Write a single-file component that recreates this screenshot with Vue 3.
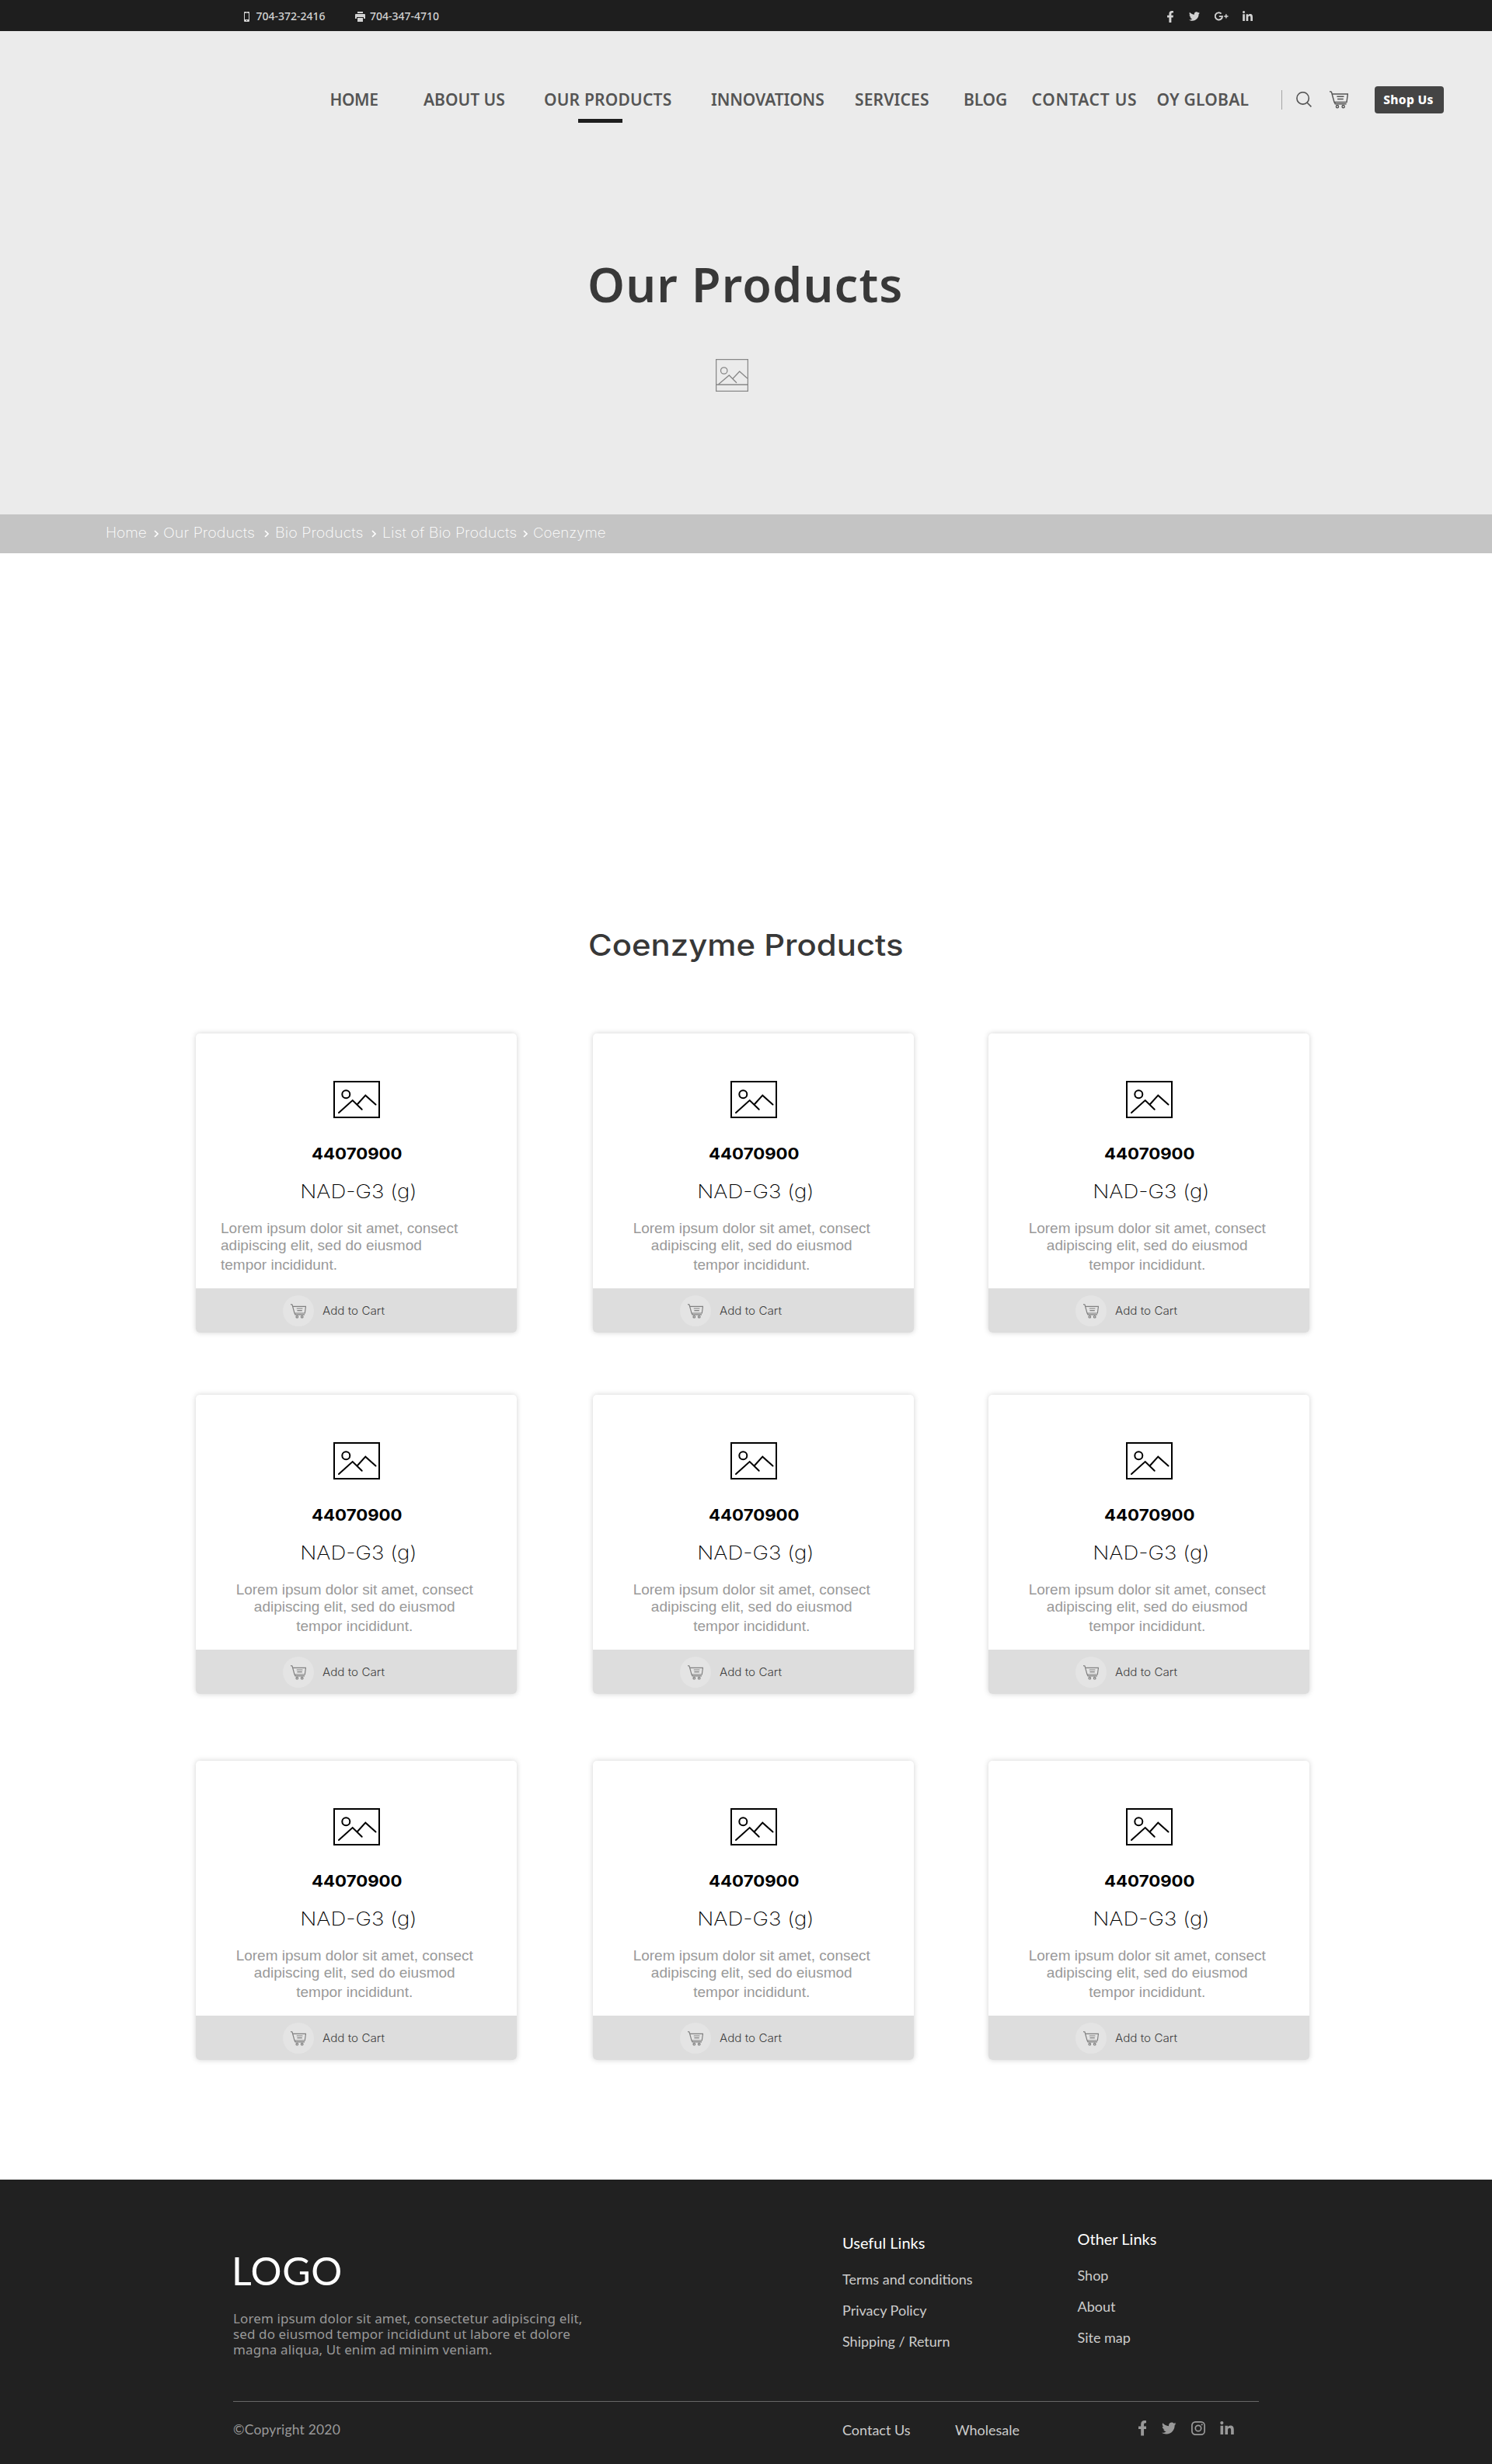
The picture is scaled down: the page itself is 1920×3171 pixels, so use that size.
<script setup>
const FACEBOOK = 'M279.14 288l14.22-92.66h-88.91v-60.13c0-25.35 12.42-50.06 52.24-50.06h40.42V6.26S260.43 0 225.36 0c-73.22 0-121.08 44.38-121.08 124.72v70.62H22.89V288h81.39v224h100.17V288z'
const TWITTER = 'M459.37 151.716c.325 4.548.325 9.097.325 13.645 0 138.72-105.583 298.558-298.558 298.558-59.452 0-114.68-17.219-161.137-47.106 8.447.974 16.568 1.299 25.34 1.299 49.055 0 94.213-16.568 130.274-44.832-46.132-.975-84.792-31.188-98.112-72.772 6.498.974 12.995 1.624 19.818 1.624 9.421 0 18.843-1.3 27.614-3.573-48.081-9.747-84.143-51.98-84.143-102.985v-1.299c13.969 7.797 30.214 12.67 47.431 13.319-28.264-18.843-46.781-51.005-46.781-87.391 0-19.492 5.197-37.36 14.294-52.954 51.655 63.675 129.3 105.258 216.365 109.807-1.624-7.797-2.599-15.918-2.599-24.04 0-57.828 46.782-104.934 104.934-104.934 30.213 0 57.502 12.67 76.67 33.137 23.715-4.548 46.456-13.32 66.599-25.34-7.798 24.366-24.366 44.833-46.132 57.827 21.117-2.273 41.584-8.122 60.426-16.243-14.292 20.791-32.161 39.308-52.628 54.253z'
const LINKEDIN = 'M100.28 448H7.4V148.9h92.88zM53.79 108.1C24.09 108.1 0 83.5 0 53.8a53.79 53.79 0 0 1 107.58 0c0 29.7-24.1 54.3-53.79 54.3zM447.9 448h-92.68V302.4c0-34.7-.7-79.2-48.29-79.2-48.29 0-55.69 37.7-55.69 76.7V448h-92.78V148.9h89.08v40.8h1.3c12.4-23.5 42.69-48.3 87.88-48.3 94 0 111.28 61.9 111.28 142.3V448z'

const nav = [
  { label: 'HOME', spacing: -0.4 },
  { label: 'ABOUT US', spacing: 0 },
  { label: 'OUR PRODUCTS', spacing: 0.2, active: true },
  { label: 'INNOVATIONS', spacing: -0.12 },
  { label: 'SERVICES', spacing: 0.15 },
  { label: 'BLOG', spacing: -0.14 },
  { label: 'CONTACT US', spacing: 0.75 },
  { label: 'OY GLOBAL', spacing: 0.22 },
]

const crumbs = ['Home', 'Our Products', 'Bio Products', 'List of Bio Products', 'Coenzyme']

const products = Array.from({ length: 9 }, (_, id) => ({
  id,
  code: '44070900',
  name: 'NAD-G3 (g)',
  lines: ['Lorem ipsum dolor sit amet, consect', 'adipiscing elit, sed do eiusmod', 'tempor incididunt.'],
}))
</script>

<template>
  <div class="page">
    <div class="topbar">
      <svg class="phone-icon" viewBox="0 0 7 13"><path fill-rule="evenodd" d="M1 0h5a1 1 0 0 1 1 1v11a1 1 0 0 1-1 1H1a1 1 0 0 1-1-1V1a1 1 0 0 1 1-1zM1 2v8h5V2zM2.3.7v.6h2.4V.7zM3 11v1h1v-1z" /></svg>
      <span class="phone">704-372-2416</span>
      <svg class="print-icon" viewBox="0 0 13 13"><path d="M3 0h7v2H3zM1 3h11a1 1 0 0 1 1 1v5h-2V7H2v2H0V4a1 1 0 0 1 1-1zM3 8h7v5H3z" /></svg>
      <span class="phone">704-347-4710</span>
      <div class="social-top">
        <svg class="st-fb" viewBox="22 0 272 512"><path :d="FACEBOOK" /></svg>
        <svg class="st-tw" viewBox="0 48 512 416"><path :d="TWITTER" /></svg>
        <svg class="st-gp" viewBox="0 0 18 12"><path d="M8.6 2.6A4.6 4.6 0 1 0 10 6.1H5.8" class="stroke" /><path d="M12.2 5.2h1.9V3.3h1.5v1.9h1.9v1.5h-1.9v1.9h-1.5V6.7h-1.9z" /></svg>
        <svg class="st-in" viewBox="0 0 448 448"><path :d="LINKEDIN" /></svg>
      </div>
    </div>

    <header class="hero">
      <div class="header">
        <nav class="nav">
          <a v-for="item in nav" :key="item.label" :class="{ active: item.active }" :style="{ letterSpacing: item.spacing + 'px' }">{{ item.label }}</a>
        </nav>
        <span class="divider"></span>
        <svg class="search" viewBox="0 0 20 20"><circle cx="8.6" cy="8.4" r="7.7" /><path d="m14 14 5.4 5.4" /></svg>
        <svg class="cart" viewBox="0 0 20 19"><path d="M0 .6 2 1 5 12H18.3L19.5 3.3H2.7M5.2 12l.8 1.8H18M7.8 6h7.6M8.4 8.6h6.4" /><circle cx="8.3" cy="16.7" r="1.3" /><circle cx="14.7" cy="16.7" r="1.3" /></svg>
        <button class="shop">Shop Us</button>
      </div>
      <h1>Our Products</h1>
      <svg class="hero-image" viewBox="0 0 42 42"><rect x=".6" y=".6" width="40.8" height="40.8" /><circle cx="10.7" cy="15" r="4.2" /><path d="M3.7 32.5 17.3 21 27 30.7M22 25.3 30.7 16 40.8 25M.6 33h40.8" /></svg>
    </header>

    <div class="breadcrumb">
      <template v-for="(crumb, i) in crumbs" :key="crumb">
        <span class="crumb" :class="'crumb-' + i">{{ crumb }}</span>
        <svg v-if="i < 4" class="chevron" viewBox="0 0 6 10"><path d="M1 1l4 4-4 4" /></svg>
      </template>
    </div>

    <main>
      <h2>Coenzyme Products</h2>
      <div class="grid">
        <article v-for="p in products" :key="p.id" class="card">
          <svg class="thumb" viewBox="0 0 60 48"><rect x="1" y="1" width="58" height="46" /><circle cx="16.3" cy="17.3" r="5" /><path d="M7 41 24.7 25 36.7 36.7M31 30 41.3 18.7 54.5 30.5" /></svg>
          <div class="code">{{ p.code }}</div>
          <div class="name">{{ p.name }}</div>
          <p class="desc"><span v-for="line in p.lines" :key="line">{{ line }}</span></p>
          <div class="card-footer">
            <span class="cart-circle">
              <svg class="cart-small" viewBox="0 0 20 19"><path d="M0 .6 2 1 5 12H18.3L19.5 3.3H2.7M5.2 12l.8 1.8H18M7.8 6h7.6M8.4 8.6h6.4" /><circle cx="8.3" cy="16.7" r="1.3" /><circle cx="14.7" cy="16.7" r="1.3" /></svg>
            </span>
            <span class="add">Add to Cart</span>
          </div>
        </article>
      </div>
    </main>

    <footer class="footer">
      <div class="footer-main">
        <div class="brand">
          <div class="logo">LOGO</div>
          <p>Lorem ipsum dolor sit amet, consectetur adipiscing elit,<br />sed do eiusmod tempor incididunt ut labore et dolore<br />magna aliqua, Ut enim ad minim veniam.</p>
        </div>
        <div class="links useful">
          <h3>Useful Links</h3>
          <a>Terms and conditions</a>
          <a>Privacy Policy</a>
          <a>Shipping / Return</a>
        </div>
        <div class="links other">
          <h3>Other Links</h3>
          <a>Shop</a>
          <a>About</a>
          <a>Site map</a>
        </div>
      </div>
      <div class="footer-bottom">
        <span class="copyright">©Copyright 2020</span>
        <a class="contact">Contact Us</a>
        <a class="wholesale">Wholesale</a>
        <div class="social-bottom">
          <svg class="sb-fb" viewBox="22 0 272 512" preserveAspectRatio="none"><path :d="FACEBOOK" /></svg>
          <svg class="sb-tw" viewBox="0 48 512 416"><path :d="TWITTER" /></svg>
          <svg class="sb-ig" viewBox="0 0 18 18"><rect x=".9" y=".9" width="16.2" height="16.2" rx="4.4" /><circle cx="9" cy="9" r="3.7" /><circle class="dot" cx="13.7" cy="4.3" r="1.1" /></svg>
          <svg class="sb-in" viewBox="0 0 448 448"><path :d="LINKEDIN" /></svg>
        </div>
      </div>
    </footer>
  </div>
</template>

<style>
body {
  margin: 0;
  background: #fff;
}
</style>

<style scoped>
.page {
  width: 1920px;
  height: 3171px;
  overflow: hidden;
  background: #fff;
  display: flex;
  flex-direction: column;
}
svg {
  display: block;
  flex: none;
}
h1, h2, h3, p {
  margin: 0;
}

/* contact strip */
.topbar {
  box-sizing: border-box;
  height: 40px;
  background: #1e1e1e;
  display: flex;
  align-items: center;
  padding: 2px 0 0 314px;
  fill: #d2d2d2;
}
.phone {
  width: 127px;
  font: 500 14px/20px "Noto Sans", sans-serif;
  color: #d2d2d2;
}
.phone-icon {
  width: 7px;
  height: 13px;
  margin-right: 8.5px;
}
.print-icon {
  width: 13px;
  height: 13px;
  margin-right: 6.5px;
}
.social-top {
  display: flex;
  align-items: center;
  margin-left: 899px;
}
.st-fb { width: 8px; height: 15px; }
.st-tw { width: 14px; height: 12px; margin-left: 20px; }
.st-gp { width: 18px; height: 12px; margin-left: 19px; }
.st-in { width: 13px; height: 13px; margin-left: 18px; margin-bottom: 2px; }
.stroke {
  fill: none;
  stroke: #d2d2d2;
  stroke-width: 1.9;
}

/* hero */
.hero {
  height: 622px;
  background: #ebebeb;
}
.header {
  display: flex;
  align-items: center;
  height: 35px;
  padding: 71px 0 0 424.5px;
}
.nav {
  display: grid;
  grid-template-columns: 120.5px 155px 215px 185px 140px 87.5px 161px 160.5px;
  margin-top: -1px;
}
.nav a {
  position: relative;
  font: 600 21px/30px "Noto Sans", sans-serif;
  color: #555;
  white-space: nowrap;
}
.active::after {
  content: "";
  position: absolute;
  left: 44px;
  top: 40px;
  width: 57px;
  height: 5px;
  background: #1e1e1e;
}
.divider {
  width: 1px;
  height: 25px;
  background: #a5a5a5;
}
.search {
  width: 20px;
  height: 20px;
  margin-left: 18px;
  margin-top: -2px;
  fill: none;
  stroke: #555;
  stroke-width: 1.6;
}
.cart {
  width: 24px;
  height: 23px;
  margin-left: 23px;
  fill: none;
  stroke: #555;
  stroke-width: 1.2;
}
.shop {
  width: 89px;
  height: 35px;
  margin-left: 34px;
  padding: 0 2px 1px 0;
  border: 0;
  border-radius: 4px;
  background: #444;
  color: #fff;
  font: 800 15.5px/24px "Noto Sans", sans-serif;
  letter-spacing: 0.3px;
}
h1 {
  margin: 178px 0 0 756px;
  font: 600 61px/84px "Noto Sans", sans-serif;
  letter-spacing: 1.2px;
  color: #383838;
}
.hero-image {
  width: 42px;
  height: 42px;
  margin: 54px 0 0 921px;
  fill: none;
  stroke: #888;
  stroke-width: 1.3;
}

/* breadcrumb */
.breadcrumb {
  box-sizing: border-box;
  height: 50px;
  background: #c4c4c4;
  display: flex;
  align-items: flex-start;
  padding: 13px 0 0 135.5px;
}
.crumb {
  font: 200 18px/22px "Inter", sans-serif;
  color: #fff;
  white-space: nowrap;
  transform-origin: 0 50%;
}
.crumb-0 { width: 62.3px; transform: scaleX(1.06); }
.crumb-1 { width: 129.5px; margin-left: 6.7px; transform: scaleX(1.095); }
.crumb-2 { width: 123.6px; margin-left: 8px; transform: scaleX(1.095); }
.crumb-3 { width: 181.5px; margin-left: 8px; transform: scaleX(1.095); }
.crumb-4 { margin-left: 6.5px; transform: scaleX(1.04); }
.chevron {
  width: 6px;
  height: 10px;
  margin-top: 7px;
  fill: none;
  stroke: #fff;
  stroke-width: 1.6;
}

/* products */
main {
  display: flow-root;
  height: 2093px;
}
h2 {
  width: 370px;
  margin: 481px 0 0 756.8px;
  font: 500 38px/46px "Inter", sans-serif;
  white-space: nowrap;
  transform: scaleX(1.102);
  transform-origin: 0 50%;
  color: #383838;
}
.grid {
  display: grid;
  grid-template-columns: 511px 509px 413px;
  grid-template-rows: 465px 471px 385px;
  margin: 91px 0 0 252px;
}
.card {
  width: 413px;
  height: 385px;
  border-radius: 5px;
  background: #fff;
  box-shadow: 0 0 7px rgba(0, 0, 0, 0.18);
  overflow: hidden;
}
.thumb {
  width: 60px;
  height: 48px;
  margin: 61px 0 0 177px;
  fill: none;
  stroke: #000;
  stroke-width: 2;
  stroke-linecap: round;
}
.code {
  margin-top: 34px;
  padding-left: 1.5px;
  text-align: center;
  font: 700 20px/24px "Inter", sans-serif;
  transform: scaleX(1.11);
  color: #000;
}
.name {
  margin-top: 22px;
  padding-left: 5px;
  text-align: center;
  font: 250 24px/29px "Inter", sans-serif;
  transform: scaleX(1.15);
  color: #000;
}
.desc {
  margin-top: 22px;
  padding-right: 4.5px;
  text-align: center;
  font: 19px/22px "Liberation Sans", sans-serif;
  color: #999;
}
.desc span {
  display: block;
}
.desc span:last-child {
  margin-top: 3px;
}
.card:first-child .desc {
  padding: 0 0 0 32px;
  text-align: left;
}
.card-footer {
  display: flex;
  align-items: center;
  height: 57px;
  margin-top: 19px;
  padding-left: 112px;
  background: #ddd;
}
.cart-circle {
  display: flex;
  align-items: center;
  justify-content: center;
  width: 40px;
  height: 40px;
  margin-top: 1px;
  border-radius: 50%;
  background: #e4e4e4;
}
.cart-small {
  width: 20px;
  height: 19px;
  fill: none;
  stroke: #808080;
  stroke-width: 1.2;
}
.add {
  margin-left: 11px;
  font: 350 14px/17px "Inter", sans-serif;
  transform: scaleX(1.085);
  transform-origin: 0 50%;
  color: #404040;
}

/* footer */
.footer {
  height: 366px;
  background: #212121;
}
.footer-main {
  box-sizing: border-box;
  display: grid;
  grid-template-columns: 784px 302.5px 1fr;
  width: 1320px;
  height: 286px;
  margin-left: 300px;
  border-bottom: 1px solid #666;
}
.logo {
  margin: 87px 0 0 -2px;
  font: 400 50px/60px "Lato", sans-serif;
  letter-spacing: 0.6px;
  color: #fff;
}
.brand p {
  margin-top: 22px;
  font: 400 17px/20px "Noto Sans", sans-serif;
  letter-spacing: 0.12px;
  color: #999;
}
.links {
  display: flex;
  flex-direction: column;
}
.useful { padding-top: 69px; }
.other { padding-top: 64px; }
.links h3 {
  margin-bottom: 15px;
  font: 400 20px/24px "Lato", sans-serif;
  color: #fff;
}
.links a {
  font: 400 18px/40px "Lato", sans-serif;
  color: #ccc;
}
.footer-bottom {
  display: flex;
  align-items: flex-start;
  padding: 25px 0 0 300px;
}
.copyright {
  width: 784px;
  margin-top: 1px;
  font: 400 17.5px/20px "Lato", sans-serif;
  letter-spacing: 0.18px;
  color: #999;
}
.contact,
.wholesale {
  font: 400 18px/22px "Lato", sans-serif;
  color: #ccc;
}
.contact { width: 145px; }
.wholesale { width: 235.5px; }
.social-bottom {
  display: flex;
  align-items: center;
  height: 20px;
  margin-top: -1px;
  fill: #999;
}
.sb-fb { width: 10.5px; height: 19.5px; }
.sb-tw { width: 18.5px; height: 16px; margin-left: 20px; }
.sb-ig { width: 18px; height: 18px; margin-left: 19.5px; fill: none; stroke: #999; stroke-width: 1.7; }
.sb-ig .dot { fill: #999; stroke: none; }
.sb-in { width: 18px; height: 17.5px; margin-left: 18.5px; margin-bottom: 1px; }
</style>
